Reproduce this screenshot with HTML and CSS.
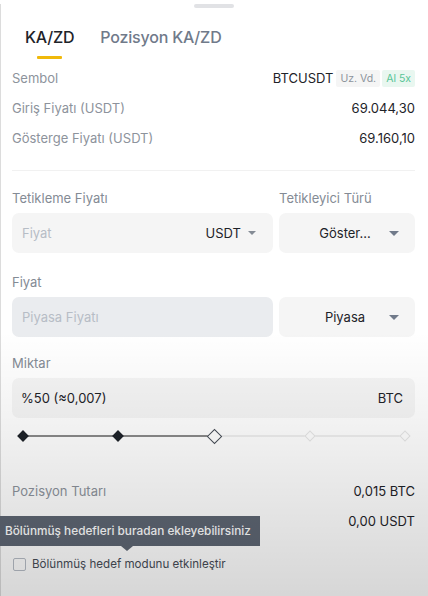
FILE: index.html
```html
<!DOCTYPE html>
<html lang="tr">
<head>
  <meta charset="UTF-8">
  <meta name="viewport" content="width=device-width, initial-scale=1.0">
  <title>KA/ZD</title>
  <link rel="stylesheet" href="styles.css">
</head>
<body>
  <div class="sheet">
    <div class="handle"></div>

    <div class="tabs">
      <div class="tab active">KA/ZD</div>
      <div class="tab">Pozisyon KA/ZD</div>
    </div>

    <div class="info">
      <div class="row">
        <span class="label">Sembol</span>
        <span class="value">BTCUSDT <span class="badge gray">Uz. Vd.</span><span class="badge green">Al 5x</span></span>
      </div>
      <div class="row">
        <span class="label">Giriş Fiyatı (USDT)</span>
        <span class="value">69.044,30</span>
      </div>
      <div class="row">
        <span class="label">Gösterge Fiyatı (USDT)</span>
        <span class="value">69.160,10</span>
      </div>
    </div>

    <div class="divider"></div>

    <div class="field-row first">
      <div class="col-main">
        <div class="field-label">Tetikleme Fiyatı</div>
        <div class="input">
          <span class="placeholder">Fiyat</span>
          <span class="unit">USDT <span class="caret small"></span></span>
        </div>
      </div>
      <div class="col-side">
        <div class="field-label">Tetikleyici Türü</div>
        <div class="input select">
          <span class="select-text">Göster...</span>
          <span class="caret"></span>
        </div>
      </div>
    </div>

    <div class="field-row">
      <div class="col-main">
        <div class="field-label">Fiyat</div>
        <div class="input disabled">
          <span class="placeholder">Piyasa Fiyatı</span>
        </div>
      </div>
      <div class="col-side">
        <div class="field-label">&nbsp;</div>
        <div class="input select">
          <span class="select-text">Piyasa</span>
          <span class="caret"></span>
        </div>
      </div>
    </div>

    <div class="field-label">Miktar</div>
    <div class="input amount">
      <span>%50 (≈0,007)</span>
      <span>BTC</span>
    </div>

    <div class="slider">
      <div class="track"><div class="fill" style="width: 50%"></div></div>
      <div class="stops">
        <span class="stop on"></span>
        <span class="stop on"></span>
        <span class="stop thumb"></span>
        <span class="stop"></span>
        <span class="stop"></span>
      </div>
    </div>

    <div class="summary">
      <div class="row">
        <span class="label">Pozisyon Tutarı</span>
        <span class="value">0,015 BTC</span>
      </div>
      <div class="row tip-row">
        <span class="label"></span>
        <span class="value">0,00 USDT</span>
        <div class="tooltip">Bölünmüş hedefleri buradan ekleyebilirsiniz</div>
      </div>
    </div>

    <label class="check">
      <span class="box"></span>
      Bölünmüş hedef modunu etkinleştir
    </label>

    <div class="shade"></div>
  </div>
</body>
</html>
```

FILE: styles.css
```css
html, body {
  margin: 0;
  height: 100%;
}
body {
  font-family: "Inter", "Noto Sans", sans-serif;
  background-color: #fff;
  color: #1e2329;
  overflow: hidden;
}
.sheet {
  position: relative;
  height: 596px;
  padding: 0 13px 0 11px;
  border-left: 1px solid #dcdcdc;
  box-sizing: border-box;
}
.handle {
  width: 40px;
  height: 4px;
  border-radius: 2px;
  background-color: #e1e2e5;
  margin: 4px auto 0;
}
.tabs {
  display: flex;
  gap: 26px;
  padding: 19px 0 0 13px;
}
.tab {
  font-size: 16px;
  font-weight: 500;
  color: #707a8a;
  height: 32px;
  position: relative;
  letter-spacing: -0.2px;
}
.tab.active {
  color: #1e2329;
}
.tab.active::after {
  content: "";
  position: absolute;
  left: 12px;
  bottom: 0;
  width: 25px;
  height: 3px;
  background-color: #f0b90b;
  border-radius: 1px;
}
.row {
  display: flex;
  justify-content: space-between;
  align-items: center;
  height: 30px;
  font-size: 13px;
}
.info {
  margin-top: 4px;
}
.label {
  color: #8d939c;
}
.value {
  color: #1e2329;
  display: flex;
  align-items: center;
}
.badge {
  font-size: 10.5px;
  padding: 2px 4px;
  margin-left: 3px;
  border-radius: 2px;
}
.badge.gray {
  background-color: #f5f5f5;
  color: #8d939c;
}
.badge.green {
  background-color: #e9f7f0;
  color: #57c596;
  margin-left: 2px;
}
.divider {
  height: 1px;
  background-color: #f1f1f1;
  margin: 17px 0 17px;
}
.field-row {
  display: flex;
  gap: 6px;
  margin-bottom: 16px;
}
.field-row.first {
  margin-bottom: 19px;
}
.col-main {
  flex: 1;
}
.col-side {
  width: 136px;
}
.field-label {
  font-size: 13px;
  line-height: 20px;
  color: #848b95;
  height: 20px;
  margin-bottom: 5px;
}
.input {
  height: 40px;
  border-radius: 7px;
  background-color: #f5f5f5;
  display: flex;
  align-items: center;
  justify-content: space-between;
  padding: 0 10px;
  font-size: 13px;
  box-sizing: border-box;
}
.input.disabled {
  background-color: #eaecef;
}
.placeholder {
  color: #b7bdc6;
}
.unit {
  display: flex;
  align-items: center;
  gap: 7px;
  margin-right: 7px;
}
.select {
  padding: 0 16px 0 14px;
}
.select-text {
  flex: 1;
  text-align: center;
  padding-left: 20px;
}
.caret {
  width: 0;
  height: 0;
  border-left: 5px solid transparent;
  border-right: 5px solid transparent;
  border-top: 5px solid #707a8a;
  margin-left: 12px;
}
.caret.small {
  border-left-width: 4px;
  border-right-width: 4px;
  border-top-width: 4px;
  border-top-color: #848b95;
  margin-left: 0;
}
.amount {
  padding: 0 12px 0 9px;
}
.slider {
  position: relative;
  margin: 11px 10px 0 11px;
  height: 14px;
}
.track {
  position: absolute;
  left: 0;
  right: 0;
  top: 6px;
  height: 2px;
  background-color: #eeeeee;
}
.fill {
  height: 100%;
  background-color: #8a8a8a;
}
.stops {
  position: relative;
  display: flex;
  justify-content: space-between;
  align-items: center;
  height: 14px;
  margin: 0 -4px;
}
.stop {
  width: 6px;
  height: 6px;
  transform: rotate(45deg);
  background-color: #fff;
  border: 1px solid #e6e6e6;
}
.stop.on {
  background-color: #1e2329;
  border-color: #1e2329;
}
.stop.thumb {
  width: 9px;
  height: 9px;
  border: 1px solid #474d57;
  background-color: #fff;
}
.summary {
  margin-top: 33px;
}
.tip-row {
  position: relative;
}
.tooltip {
  position: absolute;
  left: -12px;
  top: 10px;
  height: 30px;
  line-height: 30px;
  padding: 0 9px 0 5px;
  background-color: #5e6673;
  color: #fff;
  font-size: 11.8px;
  font-weight: 500;
  white-space: nowrap;
}
.tooltip::after {
  content: "";
  position: absolute;
  left: 121px;
  bottom: -5px;
  border-left: 6px solid transparent;
  border-right: 6px solid transparent;
  border-top: 5px solid #5e6673;
}
.check {
  display: flex;
  align-items: center;
  gap: 6px;
  font-size: 11.6px;
  line-height: 16px;
  color: #474d57;
  margin-top: 20px;
  padding-left: 1px;
}
.box {
  width: 11px;
  height: 11px;
  border: 1px solid #b7bdc6;
  border-radius: 2px;
  background-color: #fff;
}
.shade {
  position: absolute;
  left: -1px;
  right: 0;
  top: 0;
  bottom: 0;
  pointer-events: none;
  background: linear-gradient(to bottom, rgba(0,0,0,0) 0%, rgba(0,0,0,0) 55%, rgba(0,0,0,0.05) 70%, rgba(0,0,0,0.16) 100%);
}
```
